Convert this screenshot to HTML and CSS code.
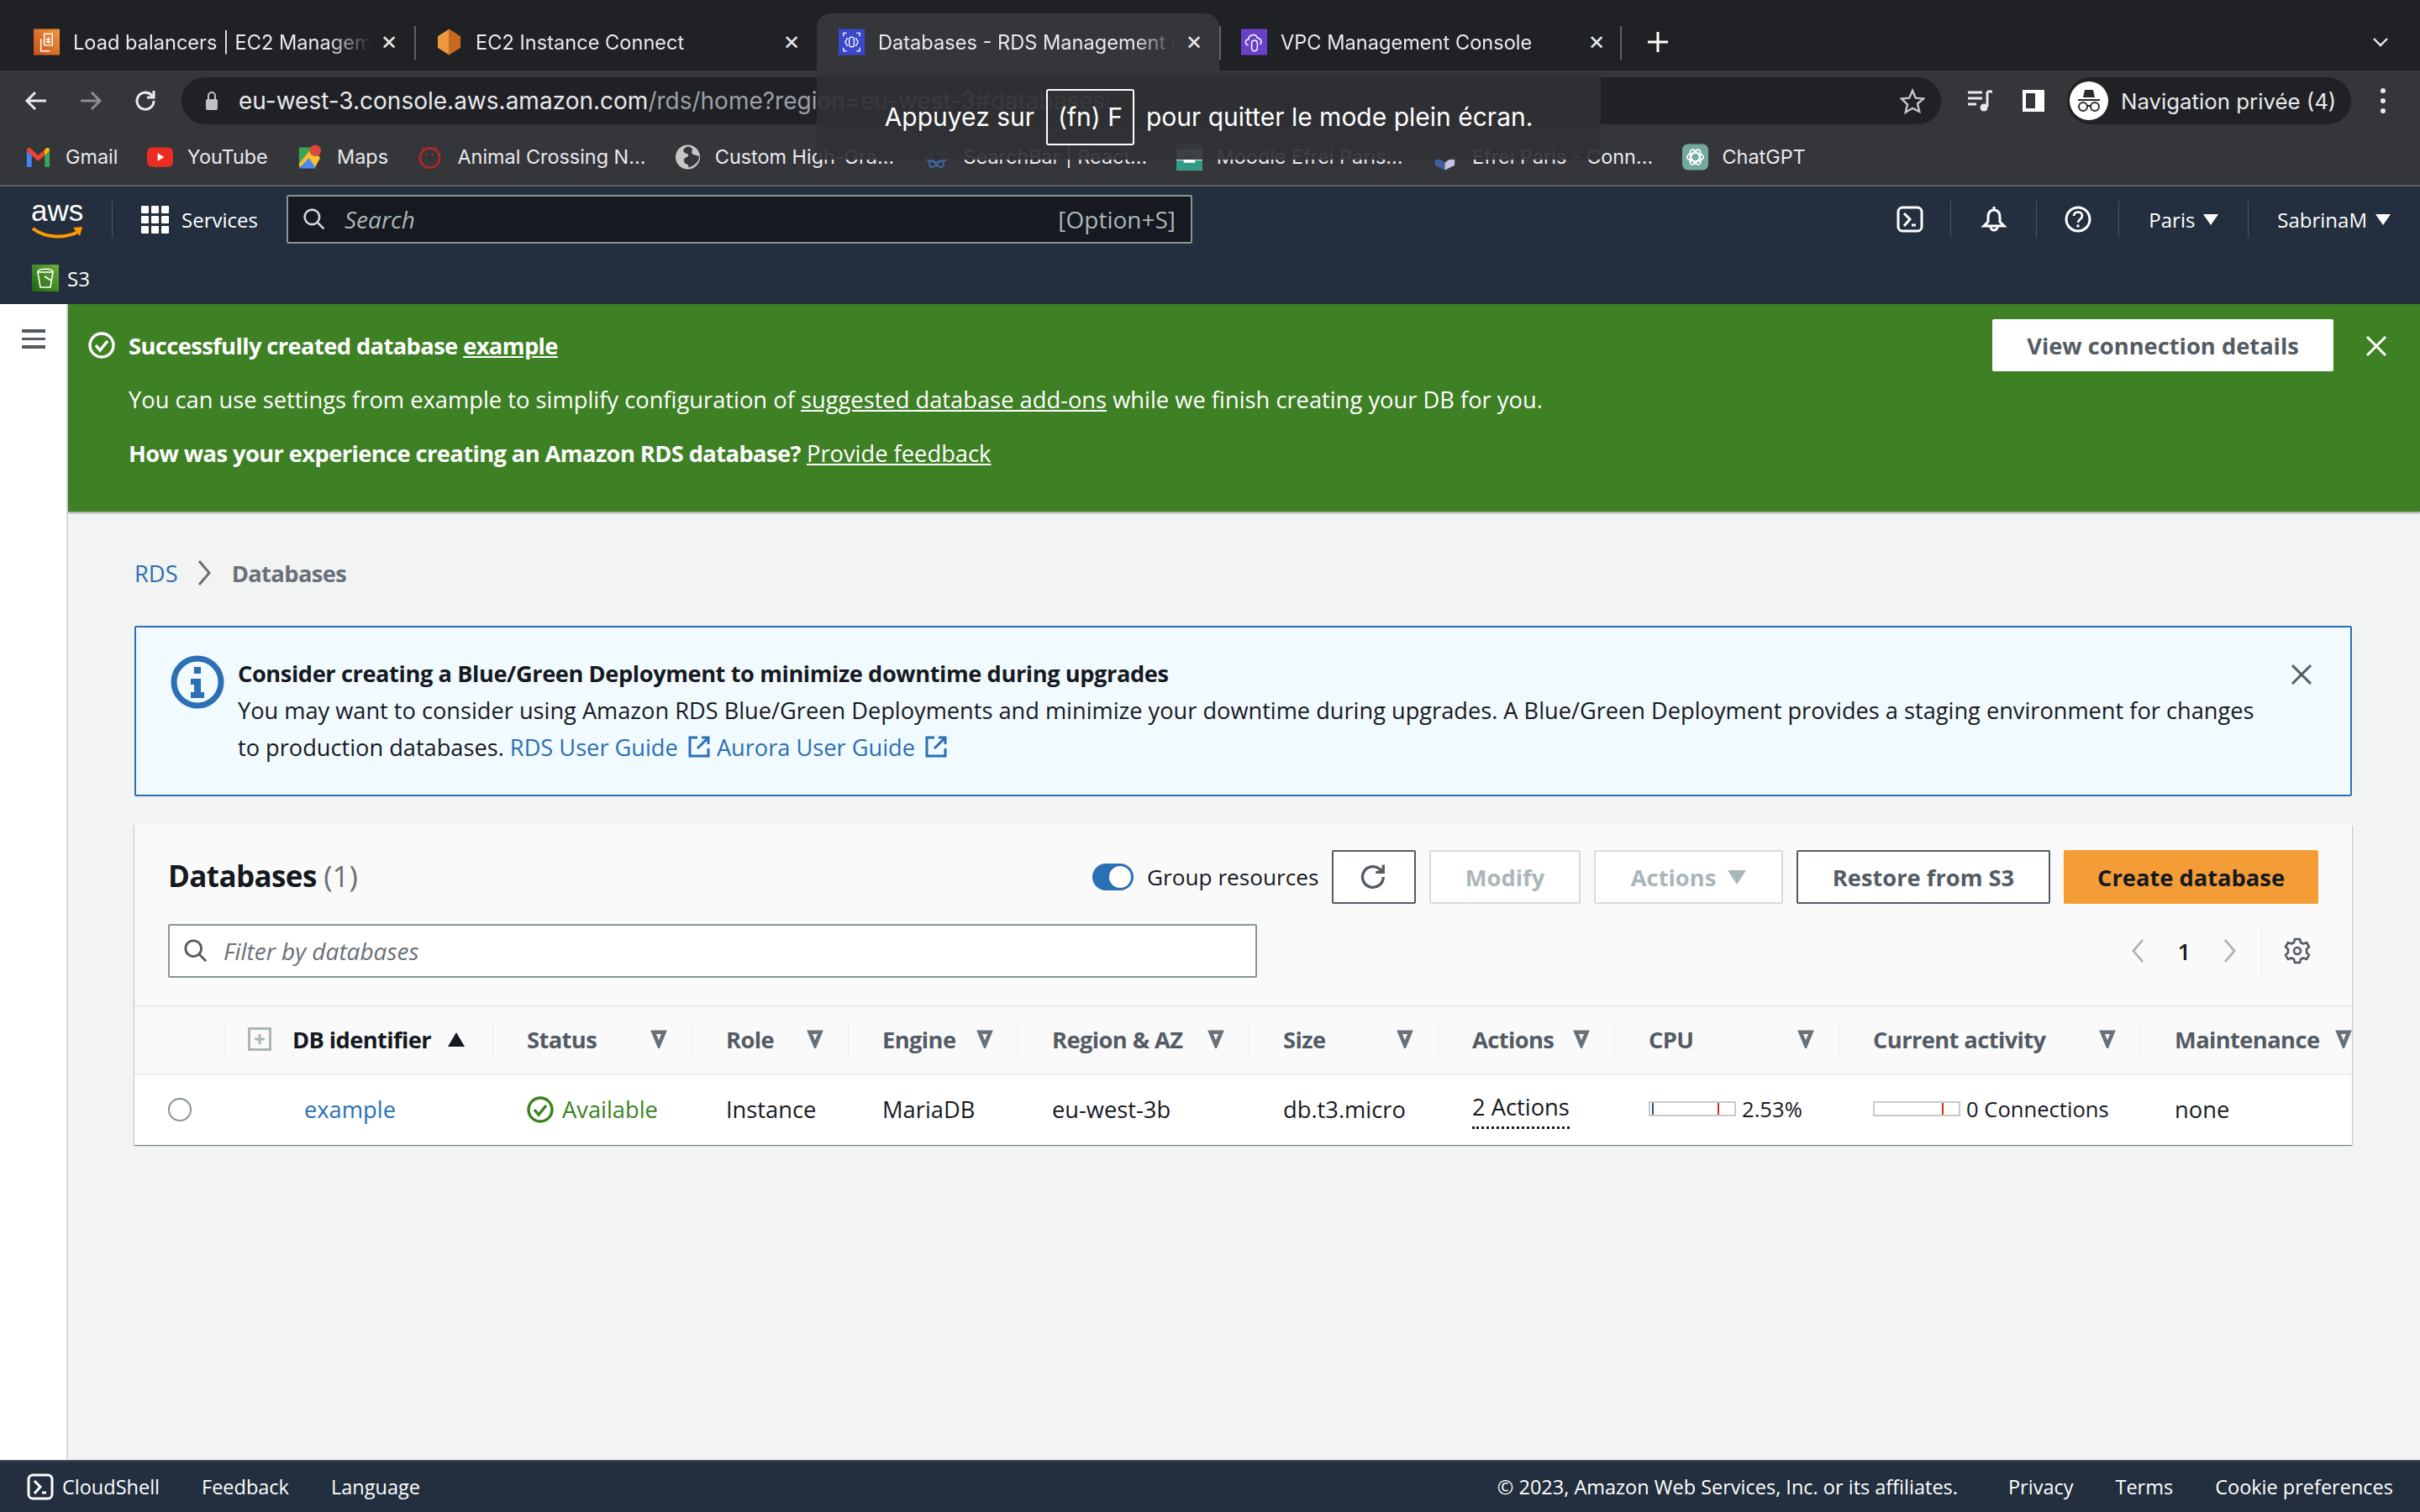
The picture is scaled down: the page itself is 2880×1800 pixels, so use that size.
FILE: index.html
```html
<!DOCTYPE html>
<html lang="en">
<head>
<meta charset="UTF-8">
<title>Databases - RDS Management Console</title>
<link rel="stylesheet" href="styles.css">
</head>
<body>

<!-- Browser chrome -->
<div class="tabstrip">
    <div class="tab">
        <svg class="fav" viewBox="0 0 32 32"><defs><linearGradient id="ec2g" x1="0" y1="1" x2="1" y2="0"><stop offset="0" stop-color="#c8511b"/><stop offset="1" stop-color="#f0983d"/></linearGradient></defs><rect width="32" height="32" fill="url(#ec2g)"/><path d="M13 6h10v14H13zM9 12v15h11M18 10v8M15 13h6M15 16h6" fill="none" stroke="#fff" stroke-width="1.5"/></svg>
        <span class="tab-title">Load balancers | EC2 Management Console</span>
        <span class="tab-close">✕</span>
    </div>
    <div class="tab tab-sep">
        <svg class="fav" viewBox="0 0 32 32"><path d="M16 0l14 9v14l-14 9z" fill="#c9681f"/><path d="M16 0L2 9v14l14 9z" fill="#f0983d"/></svg>
        <span class="tab-title">EC2 Instance Connect</span>
        <span class="tab-close">✕</span>
    </div>
    <div class="tab tab-active">
        <svg class="fav" viewBox="0 0 32 32"><rect width="32" height="32" fill="#3b48cc"/><path d="M6 9V5h4M22 5h4v4M6 23v4h4M22 27h4v-4M11 11l-3 5 3 5M21 11l3 5-3 5" fill="none" stroke="#fff" stroke-width="1.4"/><rect x="13" y="10" width="6" height="12" rx="3" fill="none" stroke="#fff" stroke-width="1.4"/></svg>
        <span class="tab-title">Databases - RDS Management Console</span>
        <span class="tab-close">✕</span>
    </div>
    <div class="tab tab-sep tab-end">
        <svg class="fav" viewBox="0 0 32 32"><rect width="32" height="32" fill="#6b40c8"/><path d="M9 20c-5-1-4-7 0-7 0-6 9-8 11-2 5 0 6 6 3 8" fill="none" stroke="#fff" stroke-width="1.5"/><rect x="13" y="14" width="7" height="13" rx="3.5" fill="none" stroke="#fff" stroke-width="1.5"/></svg>
        <span class="tab-title">VPC Management Console</span>
        <span class="tab-close">✕</span>
    </div>
    <svg class="tab-plus" viewBox="0 0 26 26"><path d="M13 1v24M1 13h24" stroke="#fff" stroke-width="3"/></svg>
    <svg class="tab-more" viewBox="0 0 20 12"><path d="M2 2l8 8 8-8" fill="none" stroke="#e8eaed" stroke-width="2.4"/></svg>
</div>

<div class="toolbar">
    <svg class="tool-ic" viewBox="0 0 32 32"><path d="M28 16H6M15 6L5 16l10 10" fill="none" stroke="#e8eaed" stroke-width="3"/></svg>
    <svg class="tool-ic dim" viewBox="0 0 32 32"><path d="M4 16h22M17 6l10 10-10 10" fill="none" stroke="#8b8d90" stroke-width="3"/></svg>
    <svg class="tool-ic" viewBox="0 0 32 32"><path d="M26 16a10 10 0 1 1-3-7l3 3M26 4v8h-8" fill="none" stroke="#e8eaed" stroke-width="3"/></svg>
    <div class="omnibox">
        <svg class="lock" viewBox="0 0 18 24"><path d="M5 10V6a4 4 0 0 1 8 0v4" fill="none" stroke="#bdc1c6" stroke-width="2"/><rect x="2" y="10" width="14" height="13" rx="2" fill="#bdc1c6"/></svg>
        <span class="url">eu-west-3.console.aws.amazon.com<span class="url-rest">/rds/home?region=eu-west-3#databases:</span></span>
        <svg class="star" viewBox="0 0 32 32"><path d="M16 3l4 9.500 10 .8-7.600 6.500 2.300 9.800L16 25.400 7.300 30.600l2.300-9.800L2 13.300l10-.8z" fill="none" stroke="#c4c7c9" stroke-width="2.600"/></svg>
    </div>
    <svg class="tool-ic queue" viewBox="0 0 32 32"><path d="M2 6h17M2 13h17M2 20h10M25 5v18" fill="none" stroke="#e8eaed" stroke-width="3"/><path d="M25 5h6" stroke="#e8eaed" stroke-width="3"/><circle cx="21" cy="24" r="4.500" fill="#e8eaed"/></svg>
    <svg class="tool-ic side" viewBox="0 0 28 28"><rect x="1" y="1" width="26" height="26" fill="#fff"/><rect x="5" y="5" width="11" height="18" fill="#35363a"/></svg>
    <div class="incognito">
        <span class="incog-face"><svg viewBox="0 0 36 36"><path d="M11 14l2-9h10l2 9zM5 16h26v2H5z" fill="#2a2b2e"/><circle cx="11" cy="25" r="5" fill="none" stroke="#2a2b2e" stroke-width="2"/><circle cx="25" cy="25" r="5" fill="none" stroke="#2a2b2e" stroke-width="2"/><path d="M16 24h4" stroke="#2a2b2e" stroke-width="2"/></svg></span>
        <span>Navigation privée (4)</span>
    </div>
    <div class="dots"><i></i><i></i><i></i></div>
</div>

<div class="bookmarks">
    <div class="bm">
        <svg class="bm-ic" viewBox="0 0 32 32"><path d="M2 8v20h6V14z" fill="#4285f4"/><path d="M24 14v14h6V8z" fill="#34a853"/><path d="M8 14L2 8c0-3 2-4 4-3l10 9 10-9c2-1 4 0 4 3l-6 6-8 7z" fill="#ea4335"/><path d="M24 14l6-6c0-3-2-4-4-3l-2 2z" fill="#fbbc04"/></svg>
        <span>Gmail</span>
    </div>
    <div class="bm">
        <svg class="bm-ic" viewBox="0 0 32 32"><rect y="4" width="32" height="24" rx="6" fill="#ea2d23"/><path d="M13 11l8 5-8 5z" fill="#fff"/></svg>
        <span>YouTube</span>
    </div>
    <div class="bm">
        <svg class="bm-ic" viewBox="0 0 32 32"><path d="M3 4h16L3 24z" fill="#3aa757"/><path d="M3 24L19 4l10 13-6 11H3z" fill="#fbc02d"/><path d="M3 30l12-13 9 13z" fill="#4a8bf0"/><circle cx="23" cy="8" r="7" fill="#d94a3c"/></svg>
        <span>Maps</span>
    </div>
    <div class="bm">
        <svg class="bm-ic" viewBox="0 0 32 32"><circle cx="16" cy="17" r="12" fill="none" stroke="#a52c2a" stroke-width="3"/><circle cx="12" cy="13" r="1.500" fill="#a52c2a"/><circle cx="20" cy="13" r="1.500" fill="#a52c2a"/><path d="M7 3l3 5M25 3l-3 5" stroke="#a52c2a" stroke-width="2"/></svg>
        <span>Animal Crossing N...</span>
    </div>
    <div class="bm">
        <svg class="bm-ic" viewBox="0 0 32 32"><circle cx="16" cy="16" r="15" fill="#c4c7c5"/><path d="M16 3c-6 2-7 6-3 8 4 1 5 3 2 5-4 1-5 5-2 8 4 1 5 3 3 5 9-2 14-8 14-14l-7-2c-3-1-2-4-1-7-2-2-4-3-6-3z" fill="#35363a"/></svg>
        <span>Custom High-Gra...</span>
    </div>
    <div class="bm">
        <svg class="bm-ic" viewBox="0 0 32 32"><g fill="none" stroke="#3f6fb5" stroke-width="1.600"><ellipse cx="16" cy="16" rx="14" ry="6"/><ellipse cx="16" cy="16" rx="14" ry="6" transform="rotate(60 16 16)"/><ellipse cx="16" cy="16" rx="14" ry="6" transform="rotate(120 16 16)"/></g></svg>
        <span>SearchBar | React...</span>
    </div>
    <div class="bm">
        <svg class="bm-ic" viewBox="0 0 32 32"><rect width="32" height="32" fill="#eef0ee"/><rect y="20" width="32" height="12" fill="#2f9c86"/><path d="M9 21a7 7 0 1 1 14 0z" fill="#2f9c86"/><rect x="9" y="17" width="14" height="6" fill="#fff"/><rect y="0" width="32" height="6" fill="#788"/></svg>
        <span>Moodle Efrei Paris...</span>
    </div>
    <div class="bm">
        <svg class="bm-ic" viewBox="0 0 32 32"><path d="M16 0l7 7-7 8-7-8z" fill="#2f4b7c"/><path d="M4 14l12 9v9L4 26z" fill="#3e5fa0"/><path d="M28 14L16 23v9l12-6z" fill="#c5c3e4"/></svg>
        <span>Efrei Paris - Conn...</span>
    </div>
    <div class="bm">
        <svg class="bm-ic" viewBox="0 0 32 32"><rect width="32" height="32" rx="7" fill="#74aa9c"/><g fill="none" stroke="#fff" stroke-width="1.800"><ellipse cx="16" cy="16" rx="10" ry="5"/><ellipse cx="16" cy="16" rx="10" ry="5" transform="rotate(60 16 16)"/><ellipse cx="16" cy="16" rx="10" ry="5" transform="rotate(120 16 16)"/></g></svg>
        <span>ChatGPT</span>
    </div>
</div>

<div class="fs-bubble">
    <span>Appuyez sur</span><span class="fs-key">(fn) F</span><span>pour quitter le mode plein écran.</span>
</div>

<!-- AWS console header -->
<div class="awsnav">
    <div class="nav-main">
        <div class="aws-logo">
            <span class="aws-word">aws</span>
            <svg viewBox="0 0 62 20"><path d="M2 3c16 12 38 12 54 4" fill="none" stroke="#f90" stroke-width="4"/><path d="M50 2l11-1-3 11z" fill="#f90"/></svg>
        </div>
        <div class="nav-sep"></div>
        <svg class="grid-ic" viewBox="0 0 33 33"><g fill="#fff"><rect width="9" height="9" rx="1"/><rect x="12" width="9" height="9" rx="1"/><rect x="24" width="9" height="9" rx="1"/><rect y="12" width="9" height="9" rx="1"/><rect x="12" y="12" width="9" height="9" rx="1"/><rect x="24" y="12" width="9" height="9" rx="1"/><rect y="24" width="9" height="9" rx="1"/><rect x="12" y="24" width="9" height="9" rx="1"/><rect x="24" y="24" width="9" height="9" rx="1"/></g></svg>
        <span class="nav-services">Services</span>
        <div class="nav-search">
            <svg viewBox="0 0 32 32"><circle cx="13" cy="13" r="10" fill="none" stroke="#d1d5db" stroke-width="3"/><path d="M20 20l9 9" stroke="#d1d5db" stroke-width="3"/></svg>
            <span class="search-ph">Search</span>
            <span class="search-key">[Option+S]</span>
        </div>
        <div class="nav-right">
            <div class="nav-cell nav-icon-cell">
                <svg viewBox="0 0 32 32"><rect x="2" y="2" width="28" height="28" rx="5" fill="none" stroke="#fff" stroke-width="3"/><path d="M9 9l7 7-7 8M18 23h5" fill="none" stroke="#fff" stroke-width="3"/></svg>
            </div>
            <div class="nav-cell nav-icon-cell nav-bell">
                <svg viewBox="0 0 32 32"><path d="M16 5c-5 0-7 4-7 9v5l-5 5h24l-5-5v-5c0-5-2-9-7-9zM16 1v4M12 25a4 4 0 0 0 8 0" fill="none" stroke="#fff" stroke-width="3"/></svg>
            </div>
            <div class="nav-cell nav-icon-cell">
                <svg viewBox="0 0 32 32"><circle cx="16" cy="16" r="14" fill="none" stroke="#fff" stroke-width="3"/><path d="M11 12c0-6 10-6 10 0 0 4-5 4-5 8" fill="none" stroke="#fff" stroke-width="2.600"/><circle cx="16" cy="24" r="1.800" fill="#fff"/></svg>
            </div>
            <div class="nav-cell nav-paris">Paris <i class="tri-down"></i></div>
            <div class="nav-cell nav-user">SabrinaM <i class="tri-down"></i></div>
        </div>
    </div>
    <div class="nav-fav">
        <svg viewBox="0 0 32 32"><defs><linearGradient id="s3g" x1="0" y1="1" x2="1" y2="0"><stop offset="0" stop-color="#1b660f"/><stop offset="1" stop-color="#6cae3e"/></linearGradient></defs><rect width="32" height="32" fill="url(#s3g)"/><path d="M7 9h18l-3 18H10zM7 9c0-5 18-5 18 0M15 14l8 5" fill="none" stroke="#fff" stroke-width="1.600"/></svg>
        <span>S3</span>
    </div>
</div>

<div class="app">
    <div class="sidebar">
        <div class="burger"><i></i><i></i><i></i></div>
    </div>
    <div class="main">
        <div class="flash">
            <div class="flash-body">
                <svg class="flash-ic" viewBox="0 0 32 32"><circle cx="16" cy="16" r="14" fill="none" stroke="#fff" stroke-width="3.400"/><path d="M9 16l5 6 9-11" fill="none" stroke="#fff" stroke-width="3.400"/></svg>
                <div class="flash-text">
                    <p class="flash-line"><b>Successfully created database <a>example</a></b></p>
                    <p class="flash-line">You can use settings from example to simplify configuration of <a>suggested database add-ons</a> while we finish creating your DB for you.</p>
                    <p class="flash-line"><b>How was your experience creating an Amazon RDS database?</b> <a>Provide feedback</a></p>
                </div>
            </div>
            <button class="btn-flash">View connection details</button>
            <svg class="flash-close" viewBox="0 0 28 28"><path d="M3 3l22 22M25 3L3 25" stroke="#fff" stroke-width="3"/></svg>
        </div>

        <div class="content">
            <div class="crumbs">
                <span class="crumb-link">RDS</span>
                <svg viewBox="0 0 16 32"><path d="M2 2l12 14L2 30" fill="none" stroke="#687078" stroke-width="3"/></svg>
                <span class="crumb-cur">Databases</span>
            </div>

            <div class="info">
                <svg class="info-ic" viewBox="0 0 64 64"><circle cx="32" cy="32" r="28" fill="none" stroke="#2b6fb4" stroke-width="7"/><path d="M28 14h8v8h-8zM24 28h12v16h4v7H24v-7h4v-9h-4z" fill="#2b6fb4"/></svg>
                <div class="info-text">
                    <b>Consider creating a Blue/Green Deployment to minimize downtime during upgrades</b><br>
                    You may want to consider using Amazon RDS Blue/Green Deployments and minimize your downtime during upgrades. A Blue/Green Deployment provides a staging environment for changes
                    to production databases. <a>RDS User Guide <svg class="ext" viewBox="0 0 28 28"><path d="M12 3H3v22h22v-9M17 3h8v8M25 3L12 16" fill="none" stroke="#2b6fb4" stroke-width="3"/></svg></a> <a>Aurora User Guide <svg class="ext" viewBox="0 0 28 28"><path d="M12 3H3v22h22v-9M17 3h8v8M25 3L12 16" fill="none" stroke="#2b6fb4" stroke-width="3"/></svg></a>
                </div>
                <svg class="info-close" viewBox="0 0 28 28"><path d="M3 3l22 22M25 3L3 25" stroke="#545b64" stroke-width="3"/></svg>
            </div>

            <div class="panel">
                <div class="panel-head">
                    <div class="panel-row">
                        <h2>Databases <span>(1)</span></h2>
                        <div class="toggle"><i></i></div>
                        <span class="toggle-label">Group resources</span>
                        <button class="btn btn-icon"><svg viewBox="0 0 32 32"><path d="M26 16a11 11 0 1 1-4-8.500l4 3.500M26 3v8h-8" fill="none" stroke="#545b64" stroke-width="3"/></svg></button>
                        <button class="btn btn-off btn-modify">Modify</button>
                        <button class="btn btn-off btn-actions">Actions <i class="tri-down off"></i></button>
                        <button class="btn btn-restore">Restore from S3</button>
                        <button class="btn btn-primary">Create database</button>
                    </div>
                    <div class="panel-row panel-row2">
                        <div class="filter">
                            <svg viewBox="0 0 32 32"><circle cx="13" cy="13" r="10" fill="none" stroke="#545b64" stroke-width="3"/><path d="M20 20l9 9" stroke="#545b64" stroke-width="3"/></svg>
                            <span>Filter by databases</span>
                        </div>
                        <div class="pager">
                            <svg viewBox="0 0 16 32"><path d="M14 2L2 16l12 14" fill="none" stroke="#aab7b8" stroke-width="3"/></svg>
                            <span>1</span>
                            <svg viewBox="0 0 16 32"><path d="M2 2l12 14L2 30" fill="none" stroke="#aab7b8" stroke-width="3"/></svg>
                        </div>
                        <div class="gear-cell">
                            <svg viewBox="0 0 32 32"><circle cx="16" cy="16" r="4" fill="none" stroke="#545b64" stroke-width="2.600"/><path d="M13 2h6l1 4 3 1.500 4-1.500 3 5-3 3v4l3 3-3 5-4-1.500-3 1.500-1 4h-6l-1-4-3-1.500-4 1.500-3-5 3-3v-4l-3-3 3-5 4 1.500 3-1.500z" fill="none" stroke="#545b64" stroke-width="2.600"/></svg>
                        </div>
                    </div>
                </div>

                <table class="db-table">
                    <colgroup>
                        <col class="c0"><col class="c1"><col class="c2"><col class="c3"><col class="c4"><col class="c5"><col class="c6"><col class="c7"><col class="c8"><col class="c9"><col class="c10">
                    </colgroup>
                    <thead>
                        <tr>
                            <th></th>
                            <th class="th-id"><div class="th-in"><svg class="expand" viewBox="0 0 28 28"><rect width="28" height="28" fill="#aab7b8"/><rect x="3" y="3" width="22" height="22" fill="#fafafa"/><path d="M14 8v12M8 14h12" stroke="#aab7b8" stroke-width="3"/></svg><span class="th-strong">DB identifier</span><i class="tri-up"></i></div></th>
                            <th><div class="th-in">Status<svg class="th-f" viewBox="0 0 20 24"><path d="M3 3h14l-7 17z" fill="none" stroke="#687078" stroke-width="5"/></svg></div></th>
                            <th><div class="th-in">Role<svg class="th-f" viewBox="0 0 20 24"><path d="M3 3h14l-7 17z" fill="none" stroke="#687078" stroke-width="5"/></svg></div></th>
                            <th><div class="th-in">Engine<svg class="th-f" viewBox="0 0 20 24"><path d="M3 3h14l-7 17z" fill="none" stroke="#687078" stroke-width="5"/></svg></div></th>
                            <th><div class="th-in">Region &amp; AZ<svg class="th-f" viewBox="0 0 20 24"><path d="M3 3h14l-7 17z" fill="none" stroke="#687078" stroke-width="5"/></svg></div></th>
                            <th><div class="th-in">Size<svg class="th-f" viewBox="0 0 20 24"><path d="M3 3h14l-7 17z" fill="none" stroke="#687078" stroke-width="5"/></svg></div></th>
                            <th><div class="th-in">Actions<svg class="th-f" viewBox="0 0 20 24"><path d="M3 3h14l-7 17z" fill="none" stroke="#687078" stroke-width="5"/></svg></div></th>
                            <th><div class="th-in">CPU<svg class="th-f" viewBox="0 0 20 24"><path d="M3 3h14l-7 17z" fill="none" stroke="#687078" stroke-width="5"/></svg></div></th>
                            <th><div class="th-in">Current activity<svg class="th-f" viewBox="0 0 20 24"><path d="M3 3h14l-7 17z" fill="none" stroke="#687078" stroke-width="5"/></svg></div></th>
                            <th class="th-last"><div class="th-in">Maintenance<svg class="th-f" viewBox="0 0 20 24"><path d="M3 3h14l-7 17z" fill="none" stroke="#687078" stroke-width="5"/></svg></div></th>
                        </tr>
                    </thead>
                    <tbody>
                        <tr>
                            <td class="td-radio"><i class="radio"></i></td>
                            <td class="td-id"><a>example</a></td>
                            <td class="td-status"><svg viewBox="0 0 32 32"><circle cx="16" cy="16" r="14" fill="none" stroke="#3b821f" stroke-width="3.400"/><path d="M9 16l5 6 9-11" fill="none" stroke="#3b821f" stroke-width="3.400"/></svg>Available</td>
                            <td>Instance</td>
                            <td>MariaDB</td>
                            <td>eu-west-3b</td>
                            <td>db.t3.micro</td>
                            <td><span class="dotted">2 Actions</span></td>
                            <td class="td-small"><div class="meter"><div class="meter-box"><i class="m-blue"></i><i class="m-red"></i></div>2.53%</div></td>
                            <td class="td-small"><div class="meter"><div class="meter-box"><i class="m-red"></i></div>0 Connections</div></td>
                            <td>none</td>
                        </tr>
                    </tbody>
                </table>
            </div>
        </div>
    </div>
</div>

<div class="footer">
    <svg viewBox="0 0 32 32"><rect x="2" y="2" width="28" height="28" rx="5" fill="none" stroke="#fff" stroke-width="3"/><path d="M9 9l7 7-7 8M18 23h5" fill="none" stroke="#fff" stroke-width="3"/></svg>
    <span class="foot-cs">CloudShell</span>
    <span class="foot-fb">Feedback</span>
    <span>Language</span>
    <span class="foot-copy">© 2023, Amazon Web Services, Inc. or its affiliates.</span>
    <span>Privacy</span>
    <span>Terms</span>
    <span>Cookie preferences</span>
</div>

</body>
</html>
```

FILE: styles.css
```css
* {
    box-sizing: border-box;
}
body {
    margin: 0;
    width: 2880px;
    height: 1800px;
    overflow: hidden;
    display: flex;
    flex-direction: column;
    position: relative;
    font-family: "Open Sans", "Noto Sans", sans-serif;
    font-size: 27.3px;
    color: #16191f;
    background: #fff;
}
p {
    margin: 0;
}
b,
.btn,
.btn-flash,
.crumb-cur,
.panel-row h2,
.db-table th {
    font-weight: 700;
    letter-spacing: -0.6px;
}
svg {
    display: block;
    flex: none;
}

/* browser tabs */
.tabstrip {
    height: 84px;
    flex: none;
    background: #202124;
    display: flex;
    align-items: flex-end;
    padding-left: 14px;
    position: relative;
    font-family: Inter, sans-serif;
    font-size: 23.6px;
    color: #e8eaed;
}
.tab {
    width: 479px;
    height: 68px;
    display: flex;
    align-items: center;
    padding: 0 20px 0 26px;
    position: relative;
}
.tab-sep::before {
    content: "";
    position: absolute;
    left: 0;
    top: 15px;
    height: 40px;
    width: 2px;
    background: #5f6368;
}
.tab-end::after {
    content: "";
    position: absolute;
    right: 0;
    top: 15px;
    height: 40px;
    width: 2px;
    background: #5f6368;
}
.tab-active {
    background: #35363a;
    border-radius: 16px 16px 0 0;
}
.fav {
    width: 31px;
    height: 32px;
    margin-right: 16px;
}
.tab-title {
    flex: 1;
    white-space: nowrap;
    overflow: hidden;
    -webkit-mask-image: linear-gradient(to right, #000 86%, transparent 100%);
}
.tab-close {
    margin-left: 12px;
    font-size: 24px;
}
.tab-plus {
    width: 26px;
    height: 26px;
    margin: 0 0 21px 30px;
}
.tab-more {
    width: 20px;
    height: 12px;
    position: absolute;
    right: 37px;
    top: 44px;
}

/* address bar */
.toolbar {
    height: 72px;
    flex: none;
    background: #35363a;
    display: flex;
    align-items: center;
    padding-left: 27px;
    font-family: Inter, sans-serif;
}
.tool-ic {
    width: 32px;
    height: 32px;
    margin-right: 33px;
}
.omnibox {
    width: 2094px;
    height: 56px;
    margin-left: -6px;
    border-radius: 28px;
    background: #202124;
    display: flex;
    align-items: center;
    padding: 0 19px 0 27px;
}
.lock {
    width: 18px;
    height: 24px;
    margin-right: 23px;
}
.url {
    flex: 1;
    font-size: 28px;
    color: #e8eaed;
    white-space: nowrap;
}
.url-rest {
    color: #9aa0a6;
}
.star {
    width: 30px;
    height: 32px;
}
.queue {
    margin: 0 0 0 30px;
    width: 32px;
}
.side {
    width: 28px;
    height: 30px;
    margin: 0 0 0 34px;
}
.incognito {
    width: 338px;
    height: 56px;
    margin-left: 26px;
    border-radius: 28px;
    background: #202124;
    display: flex;
    align-items: center;
    padding-left: 3px;
    font-size: 25.8px;
    color: #e8eaed;
    white-space: nowrap;
}
.incog-face {
    width: 46px;
    height: 46px;
    border-radius: 50%;
    background: #fff;
    margin-right: 15px;
    padding: 5px;
}
.dots {
    margin-left: 35px;
    display: flex;
    flex-direction: column;
    gap: 6px;
}
.dots i {
    width: 6px;
    height: 6px;
    border-radius: 50%;
    background: #e8eaed;
}

/* bookmarks */
.bookmarks {
    height: 66px;
    flex: none;
    background: #35363a;
    border-bottom: 2px solid #5a5c60;
    display: flex;
    align-items: center;
    padding-left: 30px;
    gap: 34.4px;
    font-family: Inter, sans-serif;
    font-size: 23.4px;
    color: #e8eaed;
    padding-bottom: 3px;
}
.bm {
    display: flex;
    align-items: center;
    gap: 17px;
    white-space: nowrap;
}
.bm-ic {
    width: 31px;
    height: 32px;
}

/* fullscreen hint */
.fs-bubble {
    position: absolute;
    left: 972px;
    top: 88px;
    width: 933px;
    height: 102px;
    background: rgba(48, 49, 52, 0.92);
    display: flex;
    align-items: center;
    justify-content: center;
    gap: 14px;
    font-family: Inter, sans-serif;
    font-size: 30px;
    color: #fff;
    border-radius: 0 0 4px 4px;
    white-space: nowrap;
}
.fs-key {
    border: 2px solid #fff;
    border-radius: 3px;
    padding: 0 12px;
    height: 67px;
    line-height: 62px;
}

/* aws header */
.awsnav {
    height: 140px;
    flex: none;
    background: #232f3e;
    color: #fff;
    font-size: 24px;
}
.nav-main {
    height: 78px;
    display: flex;
    align-items: center;
    padding-left: 37px;
}
.aws-logo {
    width: 62px;
    position: relative;
    height: 56px;
}
.aws-word {
    display: block;
    font-family: "Liberation Sans", sans-serif;
    font-size: 35px;
    line-height: 36px;
    text-align: center;
}
.aws-logo svg {
    width: 62px;
    height: 20px;
}
.nav-sep {
    width: 1px;
    height: 44px;
    background: #4a5664;
    margin: 0 34px;
}
.grid-ic {
    width: 33px;
    height: 33px;
    margin-right: 15px;
}
.nav-services {
    width: 125px;
}
.nav-search {
    width: 1078px;
    height: 58px;
    background: #16191f;
    border: 2px solid #879596;
    border-radius: 2px;
    display: flex;
    align-items: center;
    padding: 0 18px 0 22px;
    color: #aab7b8;
    font-size: 28px;
}
.nav-search svg {
    width: 28px;
    height: 28px;
    margin-right: 22px;
    margin-left: -5px;
}
.search-ph {
    flex: 1;
    font-style: italic;
}
.nav-right {
    margin-left: auto;
    display: flex;
    align-items: center;
    padding-right: 35px;
}
.nav-cell {
    height: 44px;
    display: flex;
    align-items: center;
    white-space: nowrap;
    border-right: 1px solid #4a5664;
}
.nav-cell:last-child {
    border-right: 0;
}
.nav-icon-cell {
    width: 98px;
    justify-content: center;
}
.nav-bell {
    width: 102px;
}
.nav-icon-cell svg {
    width: 32px;
    height: 32px;
}
.nav-paris {
    padding: 0 30px 0 35px;
    gap: 10px;
    width: 154px;
}
.nav-user {
    padding-left: 34px;
    gap: 10px;
}
.tri-down {
    display: inline-block;
    width: 0;
    height: 0;
    border-left: 9px solid transparent;
    border-right: 9px solid transparent;
    border-top: 13px solid #fff;
}
.tri-down.off {
    border-left-width: 11px;
    border-right-width: 11px;
    border-top: 17px solid #aab7b8;
}
.nav-fav {
    height: 62px;
    display: flex;
    align-items: center;
    padding: 0 0 0 38px;
    gap: 10px;
    font-size: 24px;
}
.nav-fav svg {
    width: 32px;
    height: 32px;
}

/* page */
.app {
    flex: 1;
    display: flex;
    min-height: 0;
}
.sidebar {
    width: 81px;
    flex: none;
    background: #fff;
    border-right: 2px solid #d5dbdb;
    padding: 30px 0 0 26px;
}
.burger {
    display: flex;
    flex-direction: column;
    gap: 6px;
}
.burger i {
    width: 28px;
    height: 3.500px;
    background: #545b64;
}
.main {
    flex: 1;
    background: #f2f3f3;
    min-width: 0;
}
.flash {
    height: 247px;
    background: #3e8024;
    color: #fff;
    display: flex;
    align-items: flex-start;
    padding: 18px 30px 0 24px;
    box-shadow: 0 2px 2px rgba(0, 28, 36, 0.35);
}
.flash-body {
    flex: 1;
    display: flex;
    gap: 16px;
    padding-top: 12px;
}
.flash-ic {
    width: 32px;
    height: 34px;
    margin-top: 2px;
}
.flash-line {
    line-height: 40px;
    margin-bottom: 24px;
}
.flash a {
    text-decoration: underline;
}
.btn-flash {
    width: 406px;
    height: 62px;
    background: #fff;
    border: 0;
    border-radius: 2px;
    font-family: inherit;
    font-size: inherit;
    letter-spacing: 0;
    color: #545b64;
}
.flash-close {
    width: 28px;
    height: 28px;
    margin: 18px 8px 0 37px;
}
.content {
    padding: 53px 81px 0 79px;
}
.crumbs {
    display: flex;
    align-items: center;
    height: 40px;
}
.crumb-link {
    color: #2b6fb4;
}
.crumbs svg {
    width: 16px;
    height: 32px;
    margin: 0 25px 0 23px;
}
.crumb-cur {
    color: #687078;
}
.info {
    margin-top: 43px;
    height: 203px;
    background: #f1faff;
    border: 2px solid #2b6fb4;
    border-radius: 2px;
    display: flex;
    align-items: flex-start;
    padding: 33px 44px 0 40px;
    position: relative;
}
.info-ic {
    width: 66px;
    height: 64px;
    margin-right: 15px;
}
.info-text {
    flex: 1;
    line-height: 44px;
    font-size: 27.2px;
}
.info-text b {
    letter-spacing: -0.4px;
}
.info-text a,
.td-id a {
    color: #2b6fb4;
}
.ext {
    display: inline-block;
    width: 28px;
    height: 28px;
    vertical-align: -3px;
    margin-left: 4px;
}
.info-close {
    width: 28px;
    height: 28px;
    margin: 9px 0 0 20px;
}

/* databases panel */
.panel {
    margin-top: 34px;
    background: #fff;
    box-shadow: 0 1px 1px 0 rgba(0, 28, 36, 0.3), 1px 1px 1px 0 rgba(0, 28, 36, 0.15), -1px 1px 1px 0 rgba(0, 28, 36, 0.15);
}
.panel-head {
    height: 215px;
    background: #fafafa;
    padding: 30px 40px 0;
}
.panel-row {
    display: flex;
    align-items: center;
    height: 64px;
}
.panel-row h2 {
    margin: 0;
    padding-bottom: 3px;
    font-size: 35px;
    flex: 1;
}
.panel-row h2 span {
    font-weight: 400;
    letter-spacing: 0;
    color: #687078;
}
.toggle {
    width: 49px;
    height: 32px;
    border-radius: 16px;
    background: #2b6fb4;
    position: relative;
    margin-right: 16px;
}
.toggle i {
    position: absolute;
    right: 3px;
    top: 3px;
    width: 26px;
    height: 26px;
    border-radius: 50%;
    background: #fff;
}
.toggle-label {
    width: 220px;
    white-space: nowrap;
    font-size: 26.2px;
}
.btn {
    height: 64px;
    border: 2px solid #545b64;
    border-radius: 2px;
    background: #fff;
    font-family: inherit;
    font-size: inherit;
    letter-spacing: 0;
    color: #545b64;
    margin-right: 16px;
    white-space: nowrap;
    display: flex;
    align-items: center;
    justify-content: center;
    gap: 14px;
    padding: 0;
}
.btn-icon {
    width: 100px;
}
.btn-icon svg {
    width: 36px;
    height: 36px;
}
.btn-off {
    border-color: #d5dbdb;
    color: #aab7b8;
}
.btn-modify {
    width: 180px;
}
.btn-actions {
    width: 225px;
}
.btn-restore {
    width: 302px;
}
.btn-primary {
    width: 303px;
    margin-right: 0;
    background: #f49d37;
    border-color: #f49d37;
    color: #16191f;
}
.panel-row2 {
    margin-top: 24px;
}
.filter {
    width: 1296px;
    height: 64px;
    background: #fff;
    border: 2px solid #879596;
    border-radius: 2px;
    display: flex;
    align-items: center;
    padding-left: 16px;
    font-style: italic;
    font-size: 28px;
    color: #687078;
}
.filter svg {
    width: 30px;
    height: 30px;
    margin-right: 18px;
}
.pager {
    margin-left: auto;
    display: flex;
    align-items: center;
    gap: 37px;
    padding-right: 28px;
    font-weight: 600;
}
.pager svg {
    width: 19px;
    height: 30px;
}
.gear-cell {
    height: 64px;
    width: 68px;
    border-left: 1px solid #eaeded;
    display: flex;
    align-items: center;
    padding-left: 26px;
}
.gear-cell svg {
    width: 32px;
    height: 34px;
}

.db-table {
    width: 2639px;
    table-layout: fixed;
    border-collapse: collapse;
}
.c0 { width: 107px; }
.c1 { width: 319px; }
.c2 { width: 237px; }
.c3 { width: 186px; }
.c4 { width: 202px; }
.c5 { width: 275px; }
.c6 { width: 225px; }
.c7 { width: 210px; }
.c8 { width: 267px; }
.c9 { width: 359px; }
.c10 { width: 252px; }
.db-table th {
    height: 81px;
    background: #fafafa;
    border-top: 2px solid #eaeded;
    border-bottom: 2px solid #eaeded;
    padding: 0 0 3px;
    text-align: left;
    color: #545b64;
}
.th-in {
    height: 44px;
    border-left: 1px solid #eaeded;
    padding: 0 29px 0 40px;
    display: flex;
    align-items: center;
    justify-content: space-between;
    white-space: nowrap;
}
.db-table th:first-child {
    border-right: 0;
}
.th-id .th-in {
    padding-left: 27px;
    justify-content: flex-start;
}
.th-last .th-in {
    padding-right: 0;
}
.expand {
    width: 28px;
    height: 28px;
    margin-right: 25px;
}
.th-strong {
    color: #16191f;
}
.tri-up {
    width: 0;
    height: 0;
    margin-left: 20px;
    border-left: 10px solid transparent;
    border-right: 10px solid transparent;
    border-bottom: 17px solid #16191f;
}
.th-f {
    width: 20px;
    height: 22px;
}
.db-table td {
    height: 84px;
    padding: 0 0 3px 41px;
    white-space: nowrap;
    background: #fff;
}
.db-table .td-radio {
    padding: 0 0 1px 40px;
}
.radio {
    display: block;
    width: 28px;
    height: 28px;
    border-radius: 50%;
    border: 2px solid #879596;
}
.db-table .td-id {
    padding-left: 95px;
}
.td-status {
    color: #3b821f;
}
.td-status svg {
    display: inline-block;
    width: 32px;
    height: 32px;
    vertical-align: -6px;
    margin-right: 10px;
}
.dotted {
    display: inline-block;
    margin-top: 2px;
    border-bottom: 3px dotted #16191f;
    padding-bottom: 5px;
}
.td-small {
    font-size: 25.6px;
}
.meter {
    display: flex;
    align-items: center;
    gap: 7px;
}
.meter-box {
    width: 104px;
    height: 18px;
    border: 2px solid #c5cbcb;
    position: relative;
    background: #fff;
}
.meter-box i {
    position: absolute;
    top: 0;
    bottom: 0;
    width: 2px;
}
.m-blue {
    left: 2px;
    background: #2f4b7c;
}
.m-red {
    right: 18px;
    background: #d13212;
}

/* footer */
.footer {
    height: 62px;
    flex: none;
    background: #232f3e;
    border-top: 2px solid #414d5c;
    color: #fff;
    display: flex;
    align-items: center;
    padding: 0 32px 0 32px;
    font-size: 23.5px;
    gap: 50px;
    white-space: nowrap;
}
.footer svg {
    width: 32px;
    height: 32px;
    margin-right: -40px;
}
.foot-copy {
    margin-left: auto;
    margin-right: 10px;
}
```
